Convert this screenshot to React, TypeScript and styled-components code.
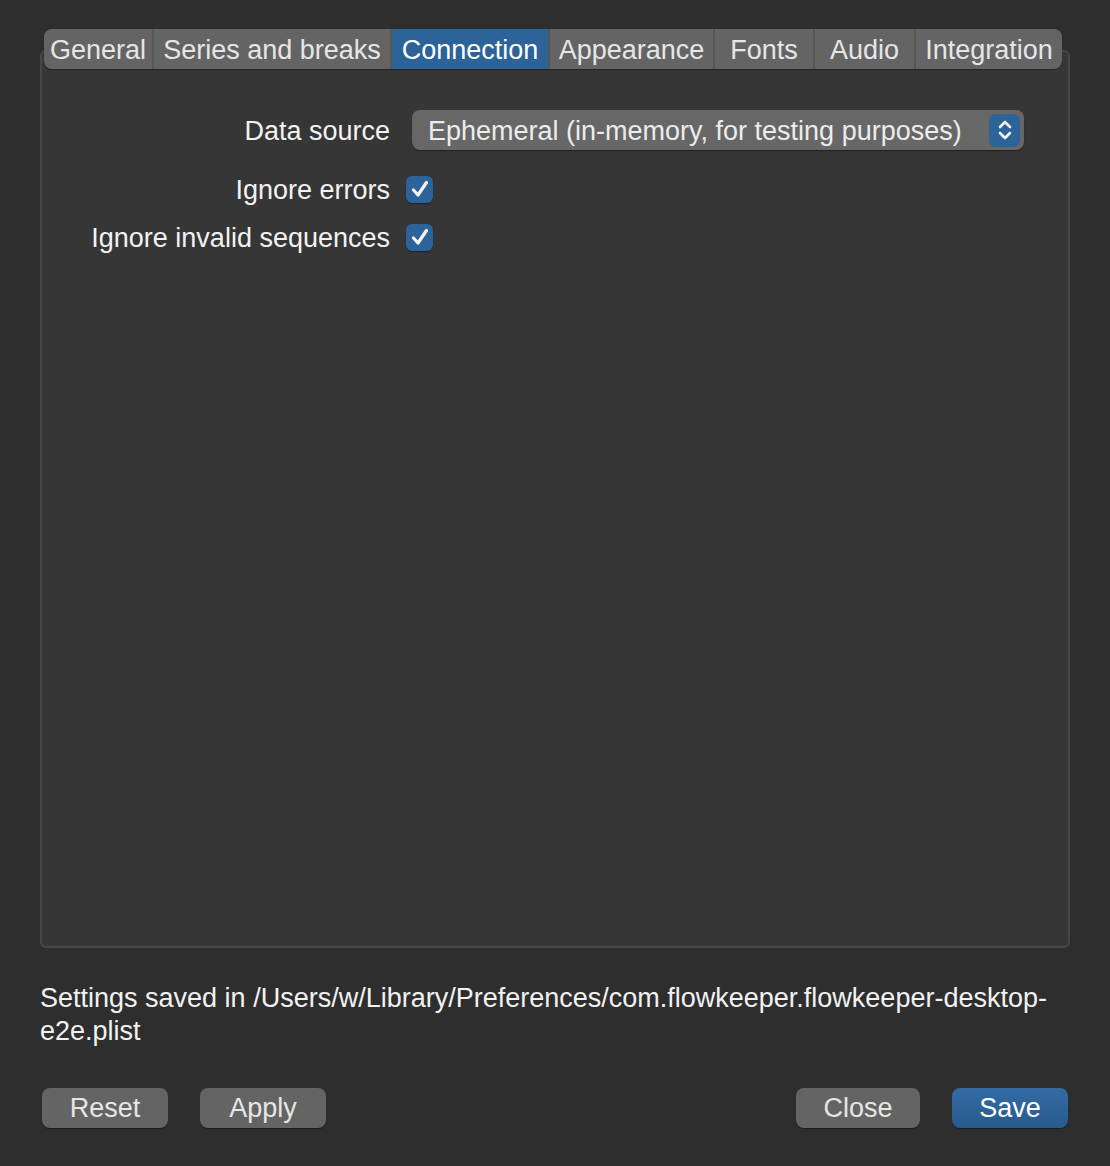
import styled, { createGlobalStyle } from 'styled-components'

const GlobalStyle = createGlobalStyle`
  html, body {
    margin: 0;
    padding: 0;
    background: #2e2e2e;
  }
  body {
    font-family: 'Liberation Sans', Arial, sans-serif;
    color: #ececec;
  }
`

const tabs = [
  { label: 'General', width: 108 },
  { label: 'Series and breaks', width: 238 },
  { label: 'Connection', width: 158 },
  { label: 'Appearance', width: 165 },
  { label: 'Fonts', width: 100 },
  { label: 'Audio', width: 101 },
  { label: 'Integration', width: 148 },
]

const Window = styled.div`
  width: 1110px;
  height: 1166px;
  box-sizing: border-box;
  padding: 29px 40px 0 40px;
  display: flex;
  flex-direction: column;
`

const TabBar = styled.div`
  position: relative;
  z-index: 1;
  display: flex;
  align-self: flex-start;
  margin-left: 4px;
  margin-bottom: -19px;
  height: 40px;
  border-radius: 8px;
  overflow: hidden;
  background: #646464;
  box-shadow: 0 1px 1px rgba(0, 0, 0, 0.35);
`

const Tab = styled.div<{ $active?: boolean; $w: number }>`
  width: ${(p) => p.$w}px;
  box-sizing: border-box;
  padding-top: 2px;
  display: flex;
  align-items: center;
  justify-content: center;
  font-size: 27px;
  white-space: nowrap;
  color: ${(p) => (p.$active ? '#ffffff' : '#e6e6e6')};
  background: ${(p) => (p.$active ? '#2c6398' : 'transparent')};
  & + & {
    border-left: 2px solid #565656;
  }
`

const Panel = styled.div`
  height: 898px;
  box-sizing: border-box;
  background: #363636;
  border: 2px solid #474747;
  border-radius: 6px;
  padding: 58px 44px 0 0;
  display: grid;
  grid-template-columns: 348px 1fr;
  grid-auto-rows: min-content;
  column-gap: 22px;
  align-content: start;
`

const Label = styled.div<{ $h: number }>`
  height: ${(p) => p.$h}px;
  box-sizing: border-box;
  padding-top: 2px;
  display: flex;
  align-items: center;
  justify-content: flex-end;
  font-size: 27px;
  white-space: nowrap;
  color: #f2f2f2;
`

const Cell = styled.div<{ $h: number }>`
  height: ${(p) => p.$h}px;
  display: flex;
  align-items: center;
`

const Select = styled.div`
  width: 612px;
  height: 40px;
  box-sizing: border-box;
  background: #676767;
  border-radius: 8px;
  box-shadow: 0 1px 1px rgba(0, 0, 0, 0.4);
  display: flex;
  align-items: center;
  justify-content: space-between;
  padding: 2px 4px 0 16px;
  font-size: 27px;
  color: #ececec;
`

const Stepper = styled.div`
  width: 31px;
  height: 33px;
  margin-top: -2px;
  border-radius: 7px;
  background: #2c6398;
  display: flex;
  align-items: center;
  justify-content: center;
`

const Checkbox = styled.div`
  width: 27px;
  height: 27px;
  margin-left: -6px;
  box-sizing: border-box;
  border-radius: 6px;
  background: #2c6398;
  box-shadow: 0 1px 1px rgba(0, 0, 0, 0.4);
  display: flex;
  align-items: center;
  justify-content: center;
`

const Footer = styled.div`
  margin-top: 34px;
  font-size: 27px;
  line-height: 33px;
  white-space: nowrap;
  color: #f2f2f2;
`

const ButtonRow = styled.div`
  margin-top: 40px;
  display: flex;
  align-items: center;
  padding: 0 2px;
`

const Group = styled.div`
  display: flex;
  gap: 32px;
`

const Spacer = styled.div`
  flex: 1;
`

const Button = styled.button<{ $primary?: boolean; $w: number }>`
  width: ${(p) => p.$w}px;
  height: 40px;
  border: none;
  border-radius: 8px;
  font-family: inherit;
  font-size: 27px;
  color: ${(p) => (p.$primary ? '#ffffff' : '#e6e6e6')};
  background: ${(p) =>
    p.$primary ? 'linear-gradient(#326ba3, #285b8d)' : '#646464'};
  box-shadow: 0 1px 1px rgba(0, 0, 0, 0.4);
  padding: 0;
`

function Check() {
  return (
    <svg width="24" height="24" viewBox="0 0 24 24">
      <path
        d="M5.5 13 L10 18 L18.5 5.5"
        fill="none"
        stroke="#f4f4f4"
        strokeWidth="3.2"
        strokeLinecap="round"
        strokeLinejoin="round"
      />
    </svg>
  )
}

function Chevrons() {
  return (
    <svg width="18" height="26" viewBox="0 0 18 26">
      <path
        d="M4 10 L9 5 L14 10 M4 16 L9 21 L14 16"
        fill="none"
        stroke="#f4f4f4"
        strokeWidth="2.6"
        strokeLinecap="round"
        strokeLinejoin="round"
      />
    </svg>
  )
}

export default function App() {
  return (
    <Window>
      <GlobalStyle />
      <TabBar>
        {tabs.map((t) => (
          <Tab key={t.label} $w={t.width} $active={t.label === 'Connection'}>
            {t.label}
          </Tab>
        ))}
      </TabBar>
      <Panel>
        <Label $h={40}>Data source</Label>
        <Cell $h={40}>
          <Select>
            <span>Ephemeral (in-memory, for testing purposes)</span>
            <Stepper>
              <Chevrons />
            </Stepper>
          </Select>
        </Cell>
        <Label $h={78}>Ignore errors</Label>
        <Cell $h={78}>
          <Checkbox>
            <Check />
          </Checkbox>
        </Cell>
        <Label $h={18}>Ignore invalid sequences</Label>
        <Cell $h={18}>
          <Checkbox>
            <Check />
          </Checkbox>
        </Cell>
      </Panel>
      <Footer>
        Settings saved in /Users/w/Library/Preferences/com.flowkeeper.flowkeeper-desktop-
        <br />
        e2e.plist
      </Footer>
      <ButtonRow>
        <Group>
          <Button $w={126}>Reset</Button>
          <Button $w={126}>Apply</Button>
        </Group>
        <Spacer />
        <Group>
          <Button $w={124}>Close</Button>
          <Button $w={116} $primary>
            Save
          </Button>
        </Group>
      </ButtonRow>
    </Window>
  )
}
